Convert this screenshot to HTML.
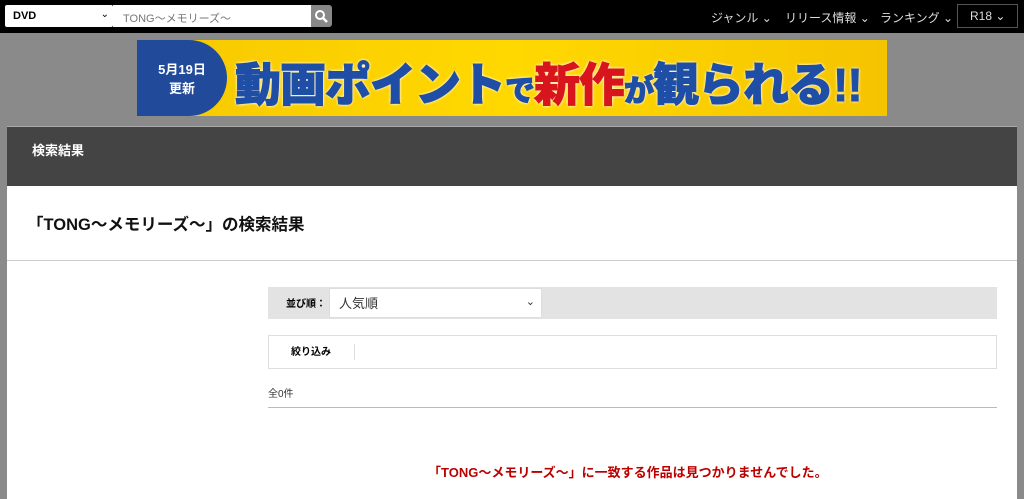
<!DOCTYPE html>
<html><head><meta charset="utf-8"><style>
*{margin:0;padding:0;box-sizing:border-box}
body{width:1024px;height:499px;overflow:hidden;background:#8a8a8a;font-family:"Liberation Sans","Noto Sans CJK JP",sans-serif;position:relative}
.top{position:absolute;left:0;top:0;width:1024px;height:33px;background:#000}
.sel{position:absolute;left:5px;top:5px;width:108px;height:22px;background:#fff;border-radius:2px;font-size:11px;font-weight:bold;padding:5px 8px}
.sel .ch{position:absolute;right:4px;top:4px;font-weight:normal;font-size:10px}
.inp{position:absolute;left:113px;top:5px;width:198px;height:22px;background:#fff;font-size:11px;color:#777;padding:5px 10px}
.btn{position:absolute;left:311px;top:5px;width:21px;height:22px;background:#888;border-radius:0 3px 3px 0}
.nav{position:absolute;top:9px;color:#ddd;font-size:12px}
.r18{position:absolute;left:957px;top:4px;width:61px;height:24px;border:1px solid #555;color:#ddd;font-size:12px;padding:4px 0 0 12px}
.banner{position:absolute;left:137px;top:40px;width:750px;height:76px;background:linear-gradient(90deg,#f7c800,#ffd800 50%,#f5c400);overflow:hidden}
.bl{position:absolute;left:0;top:0;width:90px;height:76px;background:#214a9a;border-radius:0 40px 40px 0;color:#fff;font-weight:bold;font-size:13px;text-align:center;padding-top:20px;line-height:19px}
.bt{position:absolute;left:98px;top:9px;font-size:46px;font-weight:900;color:#1f4ea6;white-space:nowrap;letter-spacing:-1px;-webkit-text-stroke:1px #1f4ea6;text-shadow:0 0 3px #fff,0 0 3px #fff}
.bt .red{color:#d8141d;-webkit-text-stroke:1px #d8141d}
.bt .s{font-size:30px}
.main{position:absolute;left:7px;top:126px;width:1010px;height:373px;background:#fff}
.hd{height:60px;background:#444;color:#fff;font-size:13px;font-weight:bold;padding:13px 25px;border-top:1px solid #aaa}
.t{height:75px;border-bottom:1px solid #ccc;font-size:16.5px;font-weight:bold;padding:25px 20px;color:#111}
.sort{position:absolute;left:261px;top:161px;width:729px;height:32px;background:#e3e3e3}
.sort b{position:absolute;left:18px;top:8px;font-size:10px}
.sort .s2{position:absolute;left:61px;top:1px;width:213px;height:30px;background:#fff;border:1px solid #ddd;font-size:13px;color:#333;padding:4px 9px}
.filt{position:absolute;left:261px;top:209px;width:729px;height:34px;border:1px solid #ddd;font-size:10px;font-weight:bold;padding:7px 22px}
.filt i{position:absolute;left:85px;top:8px;width:1px;height:16px;background:#ddd}
.cnt{position:absolute;left:261px;top:259px;font-size:10px;color:#333}
.hr{position:absolute;left:261px;top:281px;width:729px;height:1px;background:#bbb}
.nf{position:absolute;left:421px;top:336px;color:#b00;font-size:13px;font-weight:bold}
</style></head><body>
<div class="top">
<div class="sel">DVD<span class="ch">⌄</span></div>
<div class="inp">TONG～メモリーズ～</div>
<div class="btn"><svg width="21" height="22"><circle cx="9" cy="10" r="4" stroke="#fff" stroke-width="2" fill="none"/><path d="M12 13l4 4" stroke="#fff" stroke-width="2.5"/></svg></div>
<div class="nav" style="left:711px">ジャンル ⌄</div>
<div class="nav" style="left:785px">リリース情報 ⌄</div>
<div class="nav" style="left:880px">ランキング ⌄</div>
<div class="r18">R18 ⌄</div>
</div>
<div class="banner"><div class="bl">5月19日<br>更新</div>
<div class="bt">動画ポイント<span class="s">で</span><span class="red">新作</span><span class="s">が</span>観られる!!</div></div>
<div class="main">
<div class="hd">検索結果</div>
<div class="t">「TONG～メモリーズ～」の検索結果</div>
<div class="sort"><b>並び順：</b><div class="s2">人気順<span style="position:absolute;right:6px;top:6px;font-size:11px">⌄</span></div></div>
<div class="filt">絞り込み<i></i></div>
<div class="cnt">全0件</div>
<div class="hr"></div>
<div class="nf">「TONG～メモリーズ～」に一致する作品は見つかりませんでした。</div>
</div>
</body></html>
